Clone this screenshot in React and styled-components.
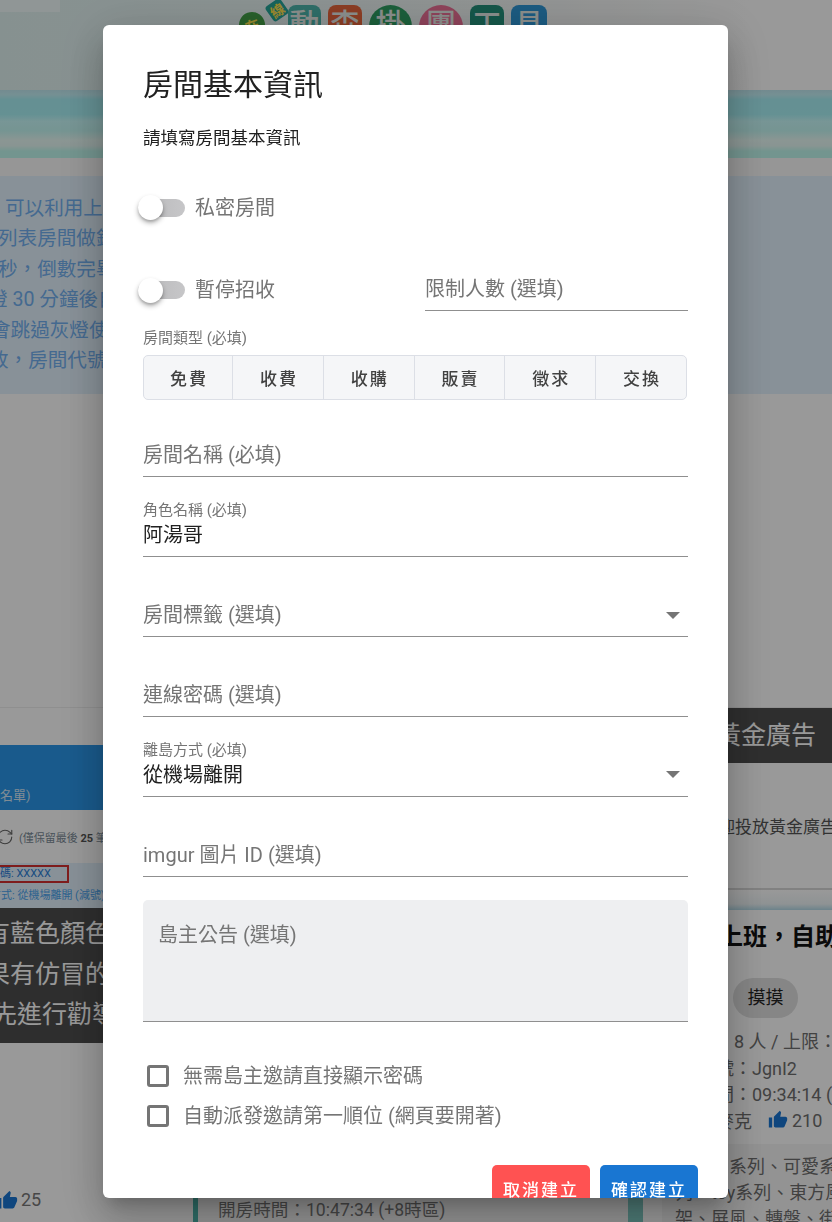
import React from 'react';
import styled, { createGlobalStyle } from 'styled-components';
import { MdThumbUp } from 'react-icons/md';
import { RefreshCw } from 'lucide-react';

const GlobalStyle = createGlobalStyle`
  html, body {
    margin: 0;
    padding: 0;
    height: 100%;
    overflow: hidden;
    font-family: Roboto, "Noto Sans CJK TC", sans-serif;
  }
  * { box-sizing: border-box; }
`;

const Page = styled.div`
  width: 832px;
  height: 1222px;
  overflow: hidden;
  background: #fff;
`;

const Header = styled.header`
  height: 90px;
  display: flex;
  justify-content: center;
  align-items: flex-start;
  padding: 5px 46px 0 0;
  overflow: hidden;
  background: linear-gradient(#f0fafa, #f0fafa) no-repeat 0 0 / 60px 12px,
    linear-gradient(90deg, #e0f2f1 0%, #e6f3f2 30%, #f3f6f5 65%, #fff 90%);
`;

const Logo = styled.div`
  display: flex;
  align-items: flex-start;
  gap: 7px;
`;

const Badge = styled.span`
  width: ${(p) => p.$size}px;
  height: ${(p) => p.$size}px;
  margin: ${(p) => p.$margin};
  display: flex;
  align-items: center;
  justify-content: center;
  font-size: 14px;
  font-weight: 700;
  color: #ffe24d;
  background: ${(p) => p.$bg};
  border-radius: ${(p) => p.$radius};
  transform: rotate(${(p) => p.$rotate}deg);
`;

const Tile = styled.span`
  width: ${(p) => p.$width}px;
  height: 60px;
  display: flex;
  justify-content: center;
  padding-top: 3px;
  font-size: 30px;
  line-height: 34px;
  font-weight: 500;
  color: #e6ece8;
  background: ${(p) => p.$bg};
  border-radius: ${(p) => (p.$cloud ? '22px 22px 8px 8px' : '8px')};
`;

const Stripes = styled.div`
  height: 68px;
  background: linear-gradient(
    180deg,
    #c0e8f0 0,
    #c4f0f6 7%,
    #a8f0f6 14%,
    #a8f2f6 36%,
    #c8fafa 46%,
    #c4f8f4 60%,
    #e8fbf6 74%,
    #e4f8f4 82%,
    #c0f8ee 90%,
    #c0f8ee 100%
  );
`;

const GrayBand = styled.div`
  height: 18px;
  background: #fafafa;
`;

const InfoPanel = styled.section`
  height: 218px;
  padding-top: 18px;
  background: #e3f2fd;
`;

const InfoLine = styled.div`
  height: 30.4px;
  line-height: 30.4px;
  margin-left: ${(p) => p.$shift}px;
  font-size: 19.6px;
  color: #72b0f0;
  white-space: nowrap;
`;

const Blank = styled.div`
  height: 314px;
  background: #fff;
  border-bottom: 1px solid #eee;
`;

const Columns = styled.div`
  height: 514px;
  display: grid;
  grid-template-columns: 193px 450px 19px 170px;
`;

const LeftColumn = styled.div`
  padding-top: 37px;
  overflow: hidden;
`;

const BlueBox = styled.div`
  height: 65px;
  display: flex;
  align-items: flex-end;
  padding-bottom: 6px;
  font-size: 13px;
  color: #d5e8f7;
  background: #2b97ea;
`;

const LogLine = styled.div`
  height: 53px;
  display: flex;
  align-items: center;
  gap: 5px;
  margin-left: -4px;
  font-size: 11px;
  color: #7a8a96;
  white-space: nowrap;

  b {
    color: #555;
  }
`;

const NoticeBox = styled.div`
  height: 45px;
  padding-top: 2px;
  background: #e3f2fd;
  font-size: 11px;
  color: #4aa3ee;
  white-space: nowrap;
`;

const RedBox = styled.div`
  width: 69px;
  height: 18px;
  line-height: 14px;
  border: 2px solid #d32f2f;
  border-left: none;
  color: #2b7fd8;
`;

const SubLine = styled.div`
  margin-top: 3px;
  margin-left: -10px;
`;

const DarkBanner = styled.div`
  height: 135px;
  padding-top: 6px;
  background: #4e4e4e;
  color: #fff;
  font-size: 25px;
  line-height: 40.5px;
  white-space: nowrap;
`;

const BannerLine = styled.div`
  margin-left: ${(p) => p.$shift}px;
`;

const LikeRow = styled.div`
  margin-top: 145px;
  margin-left: -3px;
  display: flex;
  align-items: center;
  gap: 3px;
  font-size: 18px;
  line-height: 24px;
  color: #777;
`;

const BlueThumb = styled(MdThumbUp)`
  color: #1976d2;
`;

const CenterColumn = styled.div`
  display: flex;
  flex-direction: column;
  justify-content: flex-end;
`;

const TimeCard = styled.div`
  height: 25px;
  padding-left: 20px;
  font-size: 17.6px;
  line-height: 26px;
  color: #777;
  border-left: 5px solid #4db6ac;
  border-right: 15px solid #80cbc4;
  background: #f5f5f5;
`;

const RightColumn = styled.div`
  grid-column: 4;
  overflow: hidden;
  width: 170px;
`;

const AdTitle = styled.div`
  height: 55px;
  padding-left: 54px;
  line-height: 55px;
  font-size: 25px;
  color: #fff;
  background: #4e4e4e;
  white-space: nowrap;
`;

const AdBody = styled.div`
  height: 127px;
  padding: 54px 0 0 39px;
  font-size: 17px;
  line-height: 20px;
  color: #555;
  border-bottom: 2px solid #d8d8d8;
  white-space: nowrap;
`;

const CardAccent = styled.div`
  height: 20px;
  background: linear-gradient(180deg, #fff 0, #eef5f7 70%, #b5dbe8 100%);
`;

const RoomCard = styled.div`
  background: #fff;
  color: #6e6e6e;
  font-size: 18px;
  white-space: nowrap;
`;

const RoomTitle = styled.div`
  height: 68px;
  padding-left: 33px;
  line-height: 54px;
  font-size: 24px;
  font-weight: 700;
  color: #111;
`;

const TagPill = styled.div`
  width: 65px;
  height: 40px;
  margin: 0 0 9px 71px;
  text-align: center;
  line-height: 40px;
  border-radius: 20px;
  color: #222;
  background: #e0e0e0;
`;

const RoomLine = styled.div`
  height: 26.6px;
  display: flex;
  align-items: center;
`;

const OwnerLikes = styled.span`
  display: inline-flex;
  align-items: center;
  gap: 4px;
  margin-left: 16px;
`;

const RoomTags = styled.div`
  margin-top: 11px;
  padding: 10px 0 0 13px;
  background: #f5f5f5;
  line-height: 26px;
`;

const TagLine = styled.div`
  margin-left: ${(p) => p.$indent || 0}px;
`;

const Overlay = styled.div`
  position: fixed;
  inset: 0;
  background: rgba(0, 0, 0, 0.4);
`;

const Dialog = styled.div`
  position: fixed;
  left: 103px;
  top: 25px;
  width: 625px;
  height: 1173px;
  padding: 40px 40px 0;
  overflow: hidden;
  background: #fff;
  border-radius: 6px;
  box-shadow: 0 11px 15px -7px rgba(0, 0, 0, 0.2), 0 24px 38px 3px rgba(0, 0, 0, 0.14),
    0 9px 46px 8px rgba(0, 0, 0, 0.12);
`;

const Title = styled.h2`
  margin: 0;
  font-size: 30px;
  line-height: 40px;
  font-weight: 400;
  color: #212121;
`;

const Subtitle = styled.p`
  margin: 21px 0 0;
  font-size: 17.5px;
  line-height: 24px;
  color: #212121;
`;

const SwitchRow = styled.div`
  margin-top: 38px;
  height: 39px;
  display: flex;
  align-items: center;
`;

const PauseRow = styled.div`
  margin-top: 42px;
  height: 42px;
  display: grid;
  grid-template-columns: 282px 263px;
  align-items: stretch;
`;

const SwitchLabel = styled.label`
  display: flex;
  align-items: center;
  gap: 10px;
  font-size: 20px;
  line-height: 28px;
  color: #757575;
`;

const Track = styled.span`
  width: 47px;
  height: 18px;
  margin-left: -5px;
  display: flex;
  align-items: center;
  border-radius: 9px;
  background: linear-gradient(90deg, #b8b8ba 0, #c6c6c8 100%);
`;

const Thumb = styled.span`
  width: 25px;
  height: 25px;
  border-radius: 50%;
  background: #fff;
  box-shadow: 0 3px 5px rgba(0, 0, 0, 0.3), 0 2px 2px rgba(0, 0, 0, 0.1);
`;

const SmallLabel = styled.div`
  font-size: 15px;
  line-height: 18px;
  color: #757575;
`;

const TypeLabel = styled(SmallLabel)`
  margin-top: 18px;
`;

const TypeGroup = styled.div`
  margin-top: 8px;
  width: 544px;
  height: 45px;
  display: grid;
  grid-template-columns: 88px repeat(5, 1fr);
  border: 1px solid #dcdfe6;
  border-radius: 5px;
  background: #f5f6f8;
`;

const TypeCell = styled.div`
  display: flex;
  align-items: center;
  justify-content: center;
  padding-left: 2px;
  font-size: 17px;
  font-weight: 500;
  letter-spacing: 2px;
  color: #424242;

  & + & {
    border-left: 1px solid #dcdfe6;
  }
`;

const FieldList = styled.div`
  margin-top: 16px;
  display: flex;
  flex-direction: column;
  gap: 19px;
`;

const Field = styled.div`
  height: ${(p) => (p.$short ? '42px' : '61px')};
  display: flex;
  flex-direction: column;
  justify-content: flex-end;
  padding-bottom: 7px;
  border-bottom: 1px solid #8f8f8f;
`;

const FieldRow = styled.div`
  display: flex;
  align-items: center;
  justify-content: space-between;
  padding-right: 8px;
`;

const Placeholder = styled.div`
  font-size: 20px;
  line-height: 28px;
  color: #757575;
`;

const Value = styled.div`
  margin-top: 2px;
  font-size: 20px;
  line-height: 28px;
  color: #212121;
`;

const TextArea = styled.div`
  margin-top: 23px;
  height: 122px;
  padding: 21px 15px 0;
  font-size: 20px;
  line-height: 28px;
  color: #757575;
  background: #eeeff1;
  border-radius: 5px 5px 0 0;
  border-bottom: 1px solid #8f8f8f;
`;

const Checks = styled.div`
  margin-top: 34px;
`;

const CheckRow = styled.label`
  height: 40px;
  padding-left: 4px;
  display: flex;
  align-items: center;
  gap: 14px;
  font-size: 20px;
  line-height: 28px;
  color: #757575;
`;

const CheckBox = styled.span`
  width: 22px;
  height: 22px;
  border: 3px solid #757575;
  border-radius: 3px;
`;

const Actions = styled.div`
  margin: 29px -10px 0 0;
  display: flex;
  justify-content: flex-end;
  gap: 10px;
`;

const ActionButton = styled.button`
  width: 98px;
  height: 46px;
  padding: 0;
  border: none;
  border-radius: 5px;
  font-family: inherit;
  font-size: 17px;
  font-weight: 500;
  letter-spacing: 2px;
  color: #fff;
  background: ${(p) => p.$bg};
`;

const ArrowDown = () => (
  <svg width="14" height="7" viewBox="0 0 14 7" aria-hidden="true">
    <path d="M0 0h14L7 7z" fill="#757575" />
  </svg>
);

const ROOM_TYPES = ['免費', '收費', '收購', '販賣', '徵求', '交換'];

const INFO_LINES = [
  [5, '可以利用上方的篩選'],
  [-2, '列表房間做鎖定'],
  [-2, '秒，倒數完畢後'],
  [-12, '燈 30 分鐘後自動'],
  [-9, '會跳過灰燈使用'],
  [-11, '改，房間代號'],
];

const BANNER_LINES = [
  [-15, '有藍色顏色'],
  [-15, '果有仿冒的'],
  [-8, '先進行勸導'],
];

function Switch({ label }) {
  return (
    <SwitchLabel>
      <Track>
        <Thumb />
      </Track>
      {label}
    </SwitchLabel>
  );
}

function BackgroundPage() {
  return (
    <Page>
      <Header>
        <Logo>
          <Badge $size={26} $margin="7px -4px 0 0" $bg="#43a047" $radius="50%" $rotate={-20}>
            在
          </Badge>
          <Badge $size={18} $margin="-4px -5px 0 0" $bg="#26a69a" $radius="3px" $rotate={-35}>
            線
          </Badge>
          <Tile $width={33} $bg="#4db6ac">
            動
          </Tile>
          <Tile $width={34} $bg="#e8663c">
            森
          </Tile>
          <Tile $width={43} $bg="#2e9e62" $cloud>
            掛
          </Tile>
          <Tile $width={44} $bg="#ec6f96" $cloud>
            團
          </Tile>
          <Tile $width={34} $bg="#24907a">
            工
          </Tile>
          <Tile $width={36} $bg="#2f97d6">
            具
          </Tile>
        </Logo>
      </Header>
      <Stripes />
      <GrayBand />
      <InfoPanel>
        {INFO_LINES.map(([shift, text]) => (
          <InfoLine key={text} $shift={shift}>
            {text}
          </InfoLine>
        ))}
      </InfoPanel>
      <Blank />
      <Columns>
        <LeftColumn>
          <BlueBox>名單)</BlueBox>
          <LogLine>
            <RefreshCw size={18} strokeWidth={1.5} color="#666" />
            <span>
              (僅保留最後 <b>25</b> 筆)
            </span>
          </LogLine>
          <NoticeBox>
            <RedBox>碼: XXXXX</RedBox>
            <SubLine>方式: 從機場離開 (減號)</SubLine>
          </NoticeBox>
          <DarkBanner>
            {BANNER_LINES.map(([shift, text]) => (
              <BannerLine key={text} $shift={shift}>
                {text}
              </BannerLine>
            ))}
          </DarkBanner>
          <LikeRow>
            <BlueThumb size={21} />
            25
          </LikeRow>
        </LeftColumn>
        <CenterColumn>
          <TimeCard>開房時間：10:47:34 (+8時區)</TimeCard>
        </CenterColumn>
        <RightColumn>
          <AdTitle>黃金廣告</AdTitle>
          <AdBody>歡迎投放黃金廣告</AdBody>
          <CardAccent />
          <RoomCard>
            <RoomTitle>快上班，自助</RoomTitle>
            <TagPill>摸摸</TagPill>
            <RoomLine>人數：　8 人 / 上限：10</RoomLine>
            <RoomLine>房間代號：JgnI2</RoomLine>
            <RoomLine>開房時間：09:34:14 (+8時區)</RoomLine>
            <RoomLine>
              島主：麥克
              <OwnerLikes>
                <BlueThumb size={20} />
                210
              </OwnerLikes>
            </RoomLine>
            <RoomTags>
              <TagLine $indent={54}>系列、可愛系列</TagLine>
              <TagLine>列、toy系列、東方風</TagLine>
              <TagLine>架、屏風、轉盤、街</TagLine>
            </RoomTags>
          </RoomCard>
        </RightColumn>
      </Columns>
    </Page>
  );
}

export default function App() {
  return (
    <>
      <GlobalStyle />
      <BackgroundPage />
      <Overlay />
      <Dialog>
        <Title>房間基本資訊</Title>
        <Subtitle>請填寫房間基本資訊</Subtitle>
        <SwitchRow>
          <Switch label="私密房間" />
        </SwitchRow>
        <PauseRow>
          <Switch label="暫停招收" />
          <Field $short>
            <Placeholder>限制人數 (選填)</Placeholder>
          </Field>
        </PauseRow>
        <TypeLabel>房間類型 (必填)</TypeLabel>
        <TypeGroup>
          {ROOM_TYPES.map((type) => (
            <TypeCell key={type}>{type}</TypeCell>
          ))}
        </TypeGroup>
        <FieldList>
          <Field>
            <Placeholder>房間名稱 (必填)</Placeholder>
          </Field>
          <Field>
            <SmallLabel>角色名稱 (必填)</SmallLabel>
            <Value>阿湯哥</Value>
          </Field>
          <Field>
            <FieldRow>
              <Placeholder>房間標籤 (選填)</Placeholder>
              <ArrowDown />
            </FieldRow>
          </Field>
          <Field>
            <Placeholder>連線密碼 (選填)</Placeholder>
          </Field>
          <Field>
            <SmallLabel>離島方式 (必填)</SmallLabel>
            <FieldRow>
              <Value>從機場離開</Value>
              <ArrowDown />
            </FieldRow>
          </Field>
          <Field>
            <Placeholder>imgur 圖片 ID (選填)</Placeholder>
          </Field>
        </FieldList>
        <TextArea>島主公告 (選填)</TextArea>
        <Checks>
          <CheckRow>
            <CheckBox />
            無需島主邀請直接顯示密碼
          </CheckRow>
          <CheckRow>
            <CheckBox />
            自動派發邀請第一順位 (網頁要開著)
          </CheckRow>
        </Checks>
        <Actions>
          <ActionButton $bg="#ff5252">取消建立</ActionButton>
          <ActionButton $bg="#1976d2">確認建立</ActionButton>
        </Actions>
      </Dialog>
    </>
  );
}
